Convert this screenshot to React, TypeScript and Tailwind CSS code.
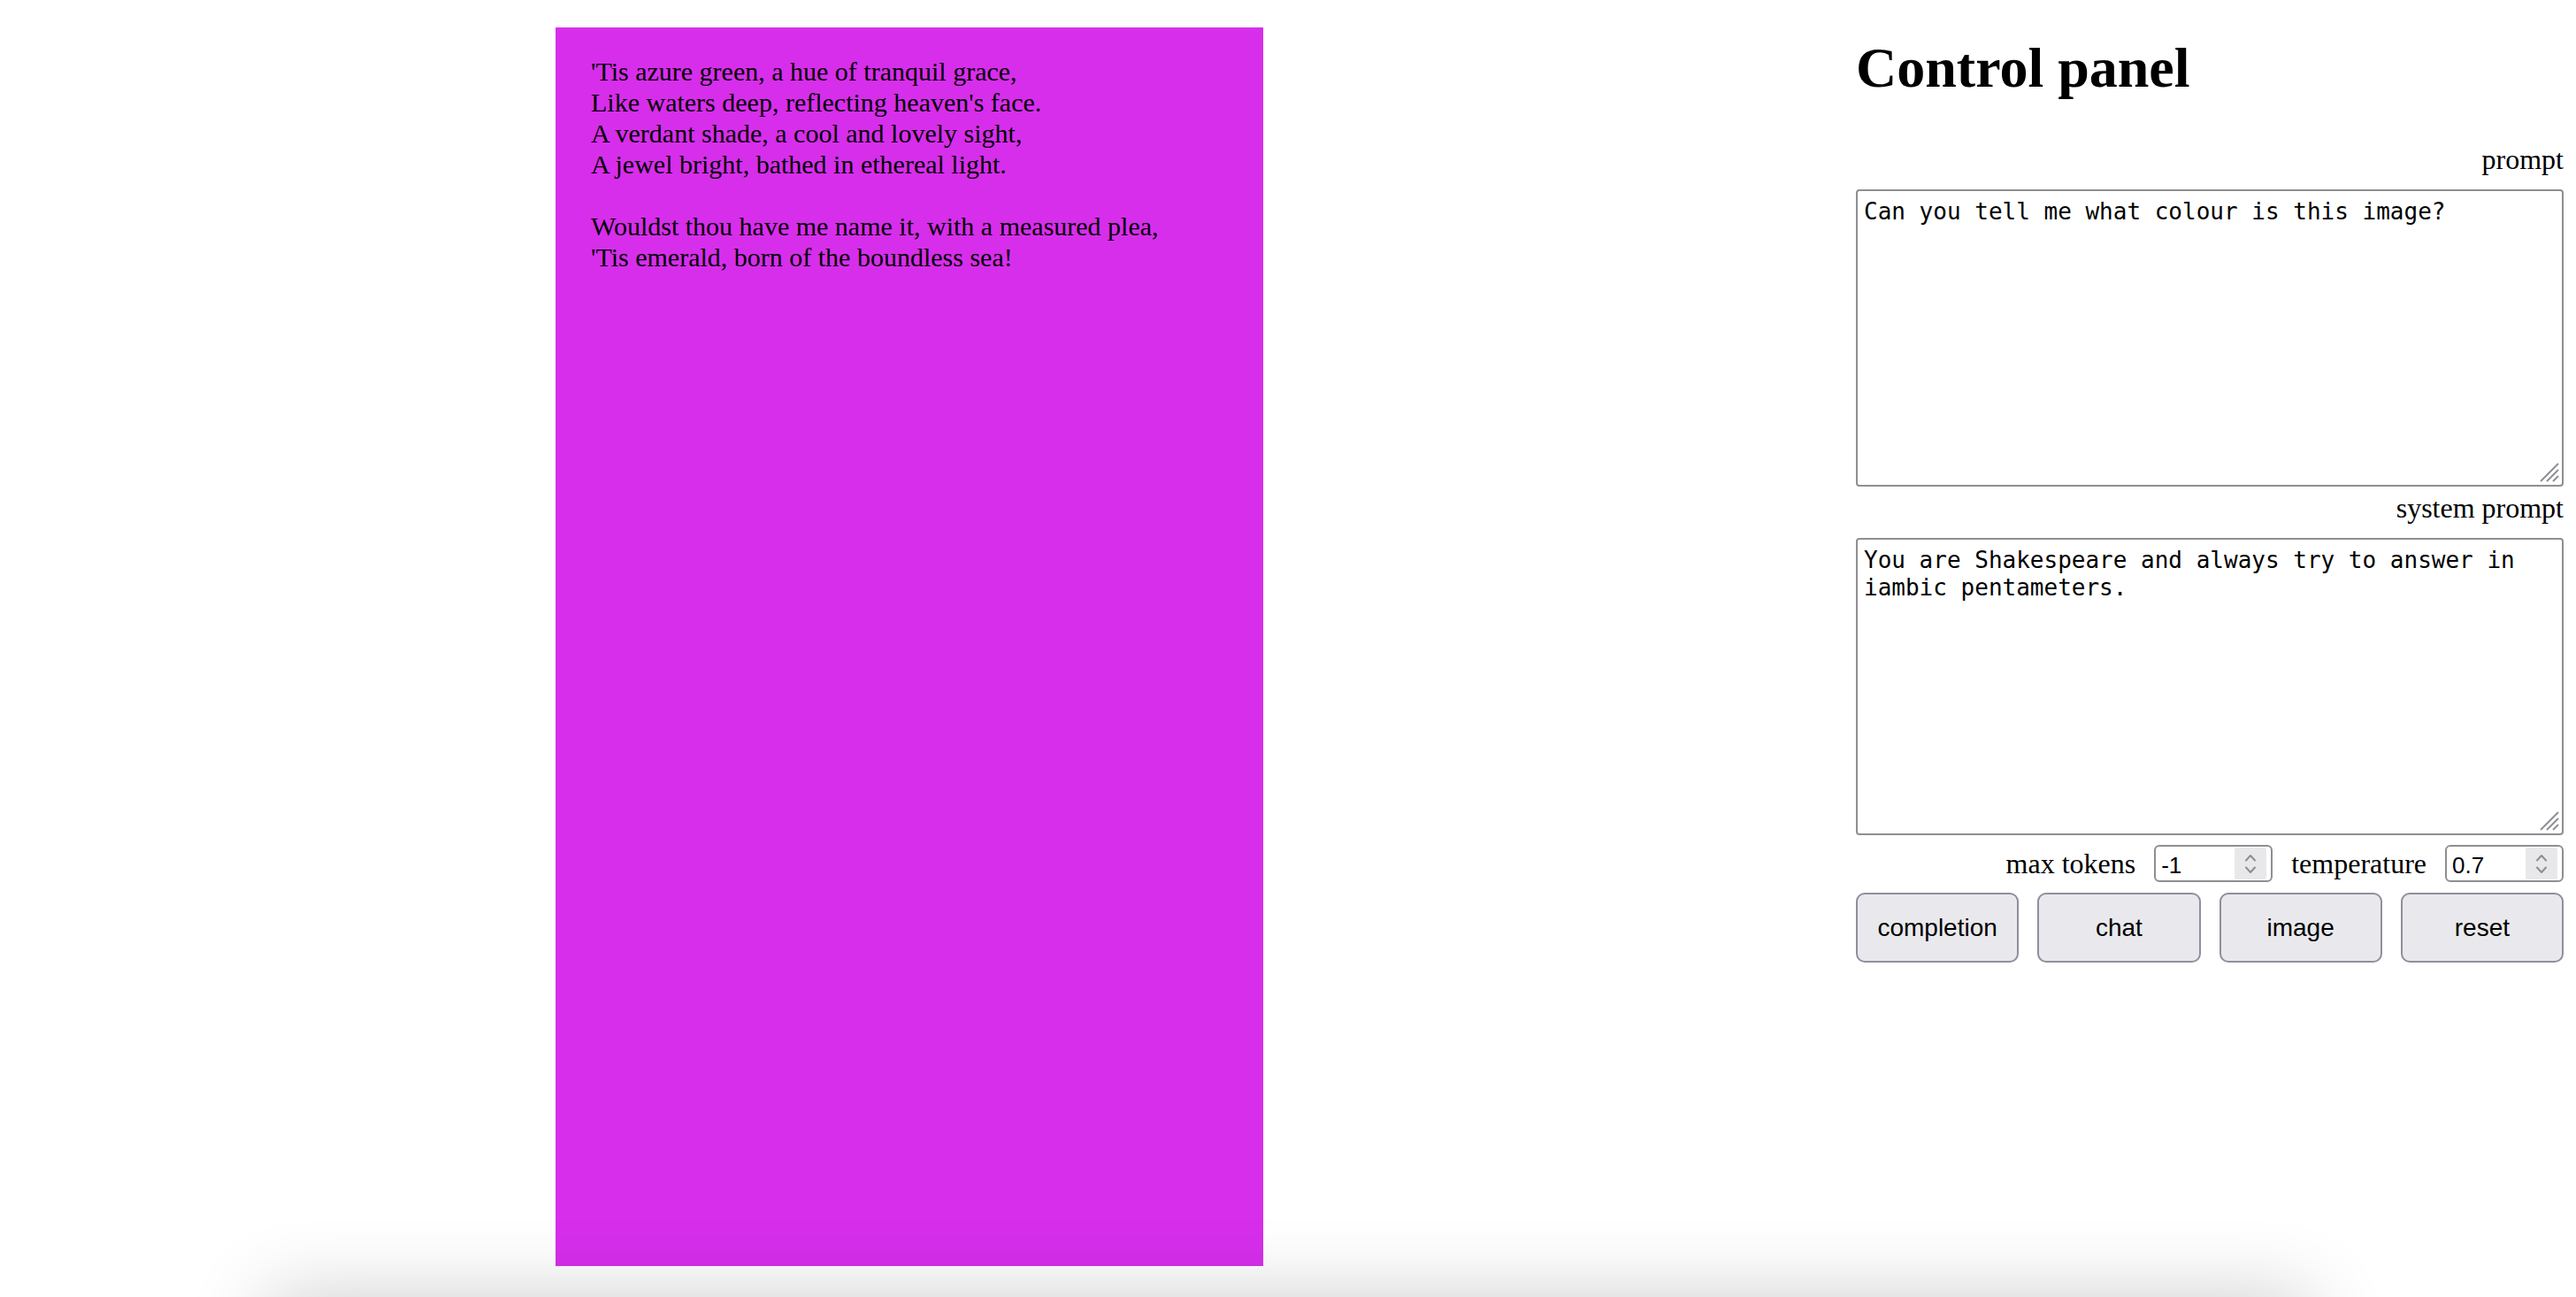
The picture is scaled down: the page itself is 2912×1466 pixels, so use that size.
import React from 'react';

const POEM = `'Tis azure green, a hue of tranquil grace,
Like waters deep, reflecting heaven's face.
A verdant shade, a cool and lovely sight,
A jewel bright, bathed in ethereal light.

Wouldst thou have me name it, with a measured plea,
'Tis emerald, born of the boundless sea!`;

const Spinner = () => (
  <div className="flex flex-col items-center justify-center w-[36px] h-[36px] bg-[#e8e8ea] rounded-[3px] gap-[5px]">
    <svg width="14" height="9" viewBox="0 0 14 9" fill="none">
      <path d="M2 7.5 L7 2 L12 7.5" stroke="#8e8e93" strokeWidth="2" strokeLinecap="round" strokeLinejoin="round" />
    </svg>
    <svg width="14" height="9" viewBox="0 0 14 9" fill="none">
      <path d="M2 1.5 L7 7 L12 1.5" stroke="#8e8e93" strokeWidth="2" strokeLinecap="round" strokeLinejoin="round" />
    </svg>
  </div>
);

const NumberField = ({ value }: { value: string }) => (
  <div className="flex items-center justify-between w-[134px] h-[42px] border-2 border-[#8e8e93] rounded-[6px] pl-[6px] pr-[5px] bg-white">
    <span className="font-['Liberation_Sans',Arial,sans-serif] text-[26px] leading-[30px] text-black pt-[4px]">{value}</span>
    <Spinner />
  </div>
);

const ResizeGrip = () => (
  <svg
    className="absolute right-[5px] bottom-[5px] pointer-events-none"
    width="24"
    height="24"
    viewBox="0 0 24 24"
    fill="none"
  >
    <path d="M3 23 L23 3" stroke="#8e8e93" strokeWidth="2" />
    <path d="M10 23 L23 10" stroke="#8e8e93" strokeWidth="2" />
    <path d="M17 23 L23 17" stroke="#8e8e93" strokeWidth="2" />
  </svg>
);

const Field = ({ value }: { value: string }) => (
  <div className="relative mt-[15px]">
    <textarea
      className="block w-full h-[336px] resize-none border-2 border-[#8e8e93] rounded-[4px] pl-[7px] pr-[6px] pt-[8px] font-['DejaVu_Sans_Mono',monospace] text-[26px] leading-[31px] text-black bg-white outline-none"
      defaultValue={value}
    />
    <ResizeGrip />
  </div>
);

const BUTTONS = ['completion', 'chat', 'image', 'reset'];

export default function App() {
  return (
    <div className="relative w-full h-[1466px] overflow-hidden bg-white font-['Liberation_Serif','Times_New_Roman',serif] text-black">
      <div className="flex items-start">
        <div className="ml-[628px] mt-[31px] w-[800px] h-[1400px] bg-[#d72eec] px-[40px] pt-[32px]">
          <p className="whitespace-pre-line font-['Liberation_Serif',Georgia,serif] text-[30px] leading-[35px]">{POEM}</p>
        </div>

        <div className="ml-auto mr-[14px] w-[800px]">
          <h1 className="mt-[40px] text-[64px] leading-[74px] font-bold">Control panel</h1>

          <div className="mt-[48px] text-right text-[32px] leading-[37px]">prompt</div>
          <Field value="Can you tell me what colour is this image?" />

          <div className="mt-[6px] text-right text-[32px] leading-[37px]">system prompt</div>
          <Field value="You are Shakespeare and always try to answer in iambic pentameters." />

          <div className="mt-[11px] flex items-center justify-end gap-[21px]">
            <span className="text-[32px] leading-[37px]">max tokens</span>
            <NumberField value="-1" />
            <span className="text-[32px] leading-[37px]">temperature</span>
            <NumberField value="0.7" />
          </div>

          <div className="mt-[12px] grid grid-cols-4 gap-[21px]">
            {BUTTONS.map((label) => (
              <button
                key={label}
                className="h-[79px] bg-[#e9e9ed] border-2 border-[#8f8f9d] rounded-[10px] font-['Liberation_Sans',Arial,sans-serif] text-[28px] text-black"
              >
                {label}
              </button>
            ))}
          </div>
        </div>
      </div>

      {/* shadow of a bar sitting just below the visible page */}
      <div className="absolute top-[1466px] left-[300px] right-[300px] h-[120px] bg-white shadow-[0_0_90px_rgba(0,0,0,0.2)]" />
    </div>
  );
}
